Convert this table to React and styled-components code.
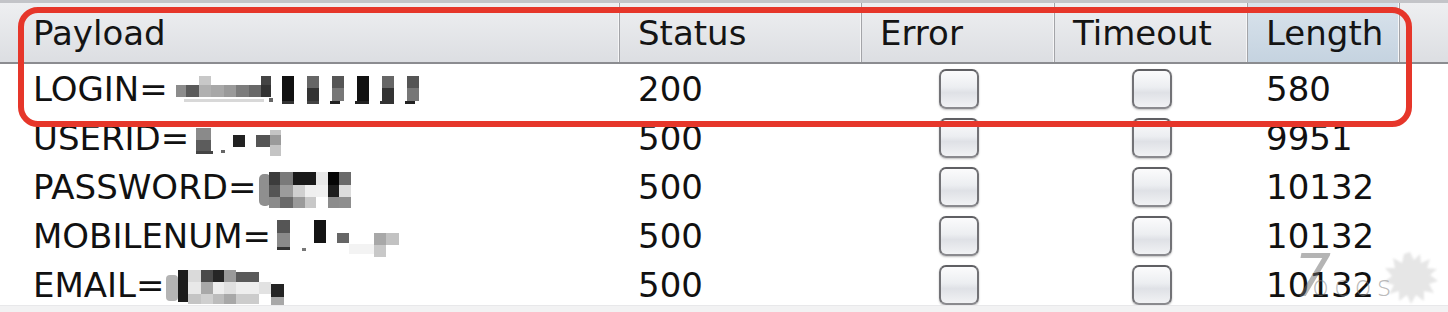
import React from "react";
import styled, { createGlobalStyle } from "styled-components";

const GlobalStyle = createGlobalStyle`
  html, body {
    margin: 0;
    padding: 0;
    background: #ffffff;
  }
  body {
    font-family: "DejaVu Sans", "Liberation Sans", sans-serif;
    color: #111;
  }
`;

const COLUMNS = "15px 605px 242px 193px 193px 152px 1fr";

const Frame = styled.div`
  position: relative;
  width: 1448px;
  height: 312px;
  overflow: hidden;
  background: #fff;
`;

const Header = styled.div`
  display: grid;
  grid-template-columns: ${COLUMNS};
  border-top: 3px solid #c3c4c8;
  border-bottom: 2px solid #8b8c90;
`;

const HeadCell = styled.div`
  height: 59px;
  display: flex;
  align-items: center;
  padding-left: 18px;
  box-sizing: border-box;
  font-size: 34px;
  color: #141414;
  white-space: nowrap;
  background: ${(p) =>
    p.$sorted
      ? "linear-gradient(#d9e3ec, #c5d3e0)"
      : "linear-gradient(#eeeff1, #dcdee2)"};
  border-right: ${(p) => (p.$last ? "none" : "1px solid #a3a4a8")};
  box-shadow: ${(p) => (p.$last ? "none" : "inset -1px 0 0 #f6f6f7")};
`;

const Body = styled.div`
  height: 241px;
  overflow: hidden;
`;

const Row = styled.div`
  display: grid;
  grid-template-columns: ${COLUMNS};
  height: 49px;
`;

const Cell = styled.div`
  display: flex;
  align-items: center;
  justify-content: ${(p) => (p.$center ? "center" : "flex-start")};
  padding-left: ${(p) => (p.$center ? "0" : "18px")};
  font-size: 34px;
  white-space: nowrap;
`;

const Check = styled.span`
  display: block;
  width: 40px;
  height: 40px;
  box-sizing: border-box;
  border-radius: 7px;
  border: 2px solid #727276;
  border-top-color: #5f5f63;
  border-bottom-color: #8a8a8e;
  background: linear-gradient(#fbfbfc 0%, #eceef1 45%, #dfe1e6 60%, #f1f2f4 100%);
  box-shadow: 0 1px 2px rgba(0, 0, 0, 0.25);
`;

const Blur = styled.svg`
  display: block;
  flex: none;
  margin-left: ${(p) => p.$dx}px;
  transform: translateY(${(p) => p.$dy}px);
  filter: blur(0.7px);
`;

const Footer = styled.div`
  height: 7px;
  background: #f2f2f3;
  border-top: 1px solid #e8e8ea;
`;

const Highlight = styled.div`
  position: absolute;
  left: 18px;
  top: 7px;
  width: 1394px;
  height: 120px;
  box-sizing: border-box;
  border: 6px solid #e6362a;
  border-radius: 20px;
  pointer-events: none;
`;

const Watermark = styled.div`
  position: absolute;
  left: 1290px;
  top: 246px;
  width: 158px;
  height: 64px;
  pointer-events: none;
`;

const Splash = styled.svg`
  position: absolute;
  left: 90px;
  top: 4px;
  filter: blur(0.8px);
`;

const Seven = styled.span`
  position: absolute;
  left: 4px;
  top: -4px;
  font-size: 58px;
  font-style: italic;
  color: rgba(105, 105, 105, 0.5);
`;

const Letters = styled.span`
  position: absolute;
  left: 22px;
  top: 24px;
  font-size: 28px;
  letter-spacing: 5px;
  color: rgba(130, 130, 130, 0.55);
  font-family: "DejaVu Sans", sans-serif;
  font-weight: 200;
`;

// pixelated blocks that hide the real payload values
const rows = [
  {
    name: "LOGIN=",
    status: 200,
    length: 580,
    blur: {
      w: 255, h: 36, dx: 1, dy: 3,
      rects: [
        [7, 11, 10, 12, "#8c8c8c"], [17, 11, 13, 12, "#5a5a5a"], [30, 2, 12, 9, "#c8c8c8"],
        [30, 11, 12, 12, "#b0b0b0"], [42, 11, 13, 12, "#a8a8a8"], [55, 11, 12, 12, "#9a9a9a"],
        [67, 11, 13, 12, "#7c7c7c"], [80, 11, 12, 12, "#686868"], [92, 2, 10, 9, "#444"],
        [92, 11, 10, 12, "#333"], [15, 25, 80, 3, "#d8d8d8"], [100, 24, 4, 4, "#666"],
        [113, 2, 12, 25, "#111"], [113, 27, 12, 3, "#333"], [138, 2, 12, 12, "#666"],
        [138, 14, 12, 13, "#333"], [138, 27, 12, 3, "#444"], [163, 2, 12, 12, "#555"],
        [163, 14, 12, 13, "#777"], [161, 27, 10, 3, "#222"], [188, 2, 12, 25, "#111"],
        [186, 27, 14, 3, "#222"], [213, 2, 12, 12, "#666"], [213, 14, 12, 13, "#333"],
        [211, 27, 14, 3, "#333"], [238, 2, 12, 12, "#555"], [238, 14, 12, 13, "#777"],
        [236, 27, 10, 3, "#222"],
      ],
    },
  },
  {
    name: "USERID=",
    status: 500,
    length: 9951,
    blur: {
      w: 95, h: 36, dx: 1, dy: 2,
      rects: [
        [6, 6, 15, 12, "#8a8a8a"], [6, 18, 15, 12, "#5c5c5c"], [6, 29, 17, 3, "#444"],
        [31, 28, 4, 3, "#666"], [80, 8, 11, 26, "#c4c4c4"], [43, 13, 12, 12, "#222"],
        [66, 13, 14, 12, "#555"], [80, 13, 11, 10, "#9a9a9a"],
      ],
    },
  },
  {
    name: "PASSWORD=",
    status: 500,
    length: 10132,
    blur: {
      w: 100, h: 40, dx: 0, dy: 3,
      rects: [
        [3, 4, 12, 32, "#8f8f8f", 5], [13, 2, 11, 13, "#3c3c3c"], [13, 15, 11, 12, "#555"],
        [13, 27, 11, 11, "#8a8a8a"], [24, 2, 13, 13, "#7a7a7a"], [24, 15, 13, 12, "#9c9c9c"],
        [24, 27, 13, 11, "#6a6a6a"], [37, 2, 23, 13, "#1a1a1a"], [37, 15, 12, 12, "#d0d0d0"],
        [37, 27, 12, 11, "#9a9a9a"], [49, 15, 11, 12, "#efefef"], [49, 27, 11, 11, "#c8c8c8"],
        [60, 2, 12, 13, "#e8e8e8"], [60, 15, 12, 12, "#f0f0f0"], [72, 2, 11, 13, "#050505"],
        [72, 15, 11, 12, "#1e1e1e"], [72, 27, 11, 11, "#8c8c8c"], [83, 2, 12, 13, "#6a6a6a"],
        [83, 15, 12, 12, "#dcdcdc"], [83, 27, 12, 11, "#8e8e8e"],
      ],
    },
  },
  {
    name: "MOBILENUM=",
    status: 500,
    length: 10132,
    blur: {
      w: 130, h: 44, dx: 1, dy: 2,
      rects: [
        [5, 4, 13, 13, "#555"], [5, 17, 13, 14, "#8a8a8a"], [5, 31, 13, 3, "#333"],
        [30, 32, 4, 3, "#777"], [42, 4, 12, 23, "#141414"], [65, 17, 12, 10, "#666"],
        [77, 28, 25, 10, "#f3f3f3"], [102, 17, 12, 12, "#a8a8a8"], [102, 29, 12, 12, "#c8c8c8"],
        [114, 17, 13, 12, "#c2c2c2"],
      ],
    },
  },
  {
    name: "EMAIL=",
    status: 500,
    length: 10132,
    blur: {
      w: 125, h: 40, dx: -2, dy: 2,
      rects: [
        [3, 8, 12, 26, "#b4b4b4", 4], [15, 3, 10, 32, "#1c1c1c"], [25, 3, 13, 12, "#dadada"],
        [25, 15, 13, 12, "#e8e8e8"], [25, 27, 13, 10, "#c4c4c4"], [38, 3, 12, 12, "#4a4a4a"],
        [38, 15, 12, 12, "#a8a8a8"], [38, 27, 12, 10, "#cfcfcf"], [50, 3, 11, 12, "#262626"],
        [50, 15, 11, 12, "#ededed"], [50, 27, 11, 10, "#bcbcbc"], [61, 3, 12, 12, "#9a9a9a"],
        [61, 15, 12, 12, "#e0e0e0"], [61, 27, 12, 10, "#a8a8a8"], [73, 5, 23, 10, "#5a5a5a"],
        [73, 15, 23, 12, "#eeeeee"], [73, 27, 23, 10, "#cccccc"], [96, 15, 12, 12, "#e2e2e2"],
        [108, 17, 13, 13, "#242424"], [108, 30, 13, 8, "#a8a8a8"],
      ],
    },
  },
];

function Mosaic({ w, h, dx, dy, rects }) {
  return (
    <Blur width={w} height={h} viewBox={`0 0 ${w} ${h}`} $dx={dx} $dy={dy}>
      {rects.map(([x, y, rw, rh, fill, r], i) => (
        <rect key={i} x={x} y={y} width={rw} height={rh} fill={fill} rx={r || 0} />
      ))}
    </Blur>
  );
}

export default function App() {
  return (
    <>
      <GlobalStyle />
      <Frame>
        <Header>
          <HeadCell />
          <HeadCell>Payload</HeadCell>
          <HeadCell>Status</HeadCell>
          <HeadCell>Error</HeadCell>
          <HeadCell>Timeout</HeadCell>
          <HeadCell $sorted>Length</HeadCell>
          <HeadCell $last />
        </Header>
        <Body>
          {rows.map((r) => (
            <Row key={r.name}>
              <Cell />
              <Cell>
                <span>{r.name}</span>
                <Mosaic {...r.blur} />
              </Cell>
              <Cell>{r.status}</Cell>
              <Cell $center>
                <Check />
              </Cell>
              <Cell $center>
                <Check />
              </Cell>
              <Cell>{r.length}</Cell>
              <Cell />
            </Row>
          ))}
        </Body>
        <Footer />
        <Highlight />
        <Watermark>
          <Splash width="60" height="56" viewBox="0 0 60 56">
            <path
              d="M30 2 L34 10 L40 4 L41 13 L50 9 L47 18 L57 19 L50 25 L58 31 L49 34 L54 43 L44 41 L44 51 L36 45 L31 54 L27 45 L19 51 L19 41 L9 44 L14 35 L4 32 L12 26 L5 18 L15 18 L13 8 L22 13 L24 4 Z"
              fill="#e6e6e6"
            />
          </Splash>
          <Seven>7</Seven>
          <Letters>ocos</Letters>
        </Watermark>
      </Frame>
    </>
  );
}
